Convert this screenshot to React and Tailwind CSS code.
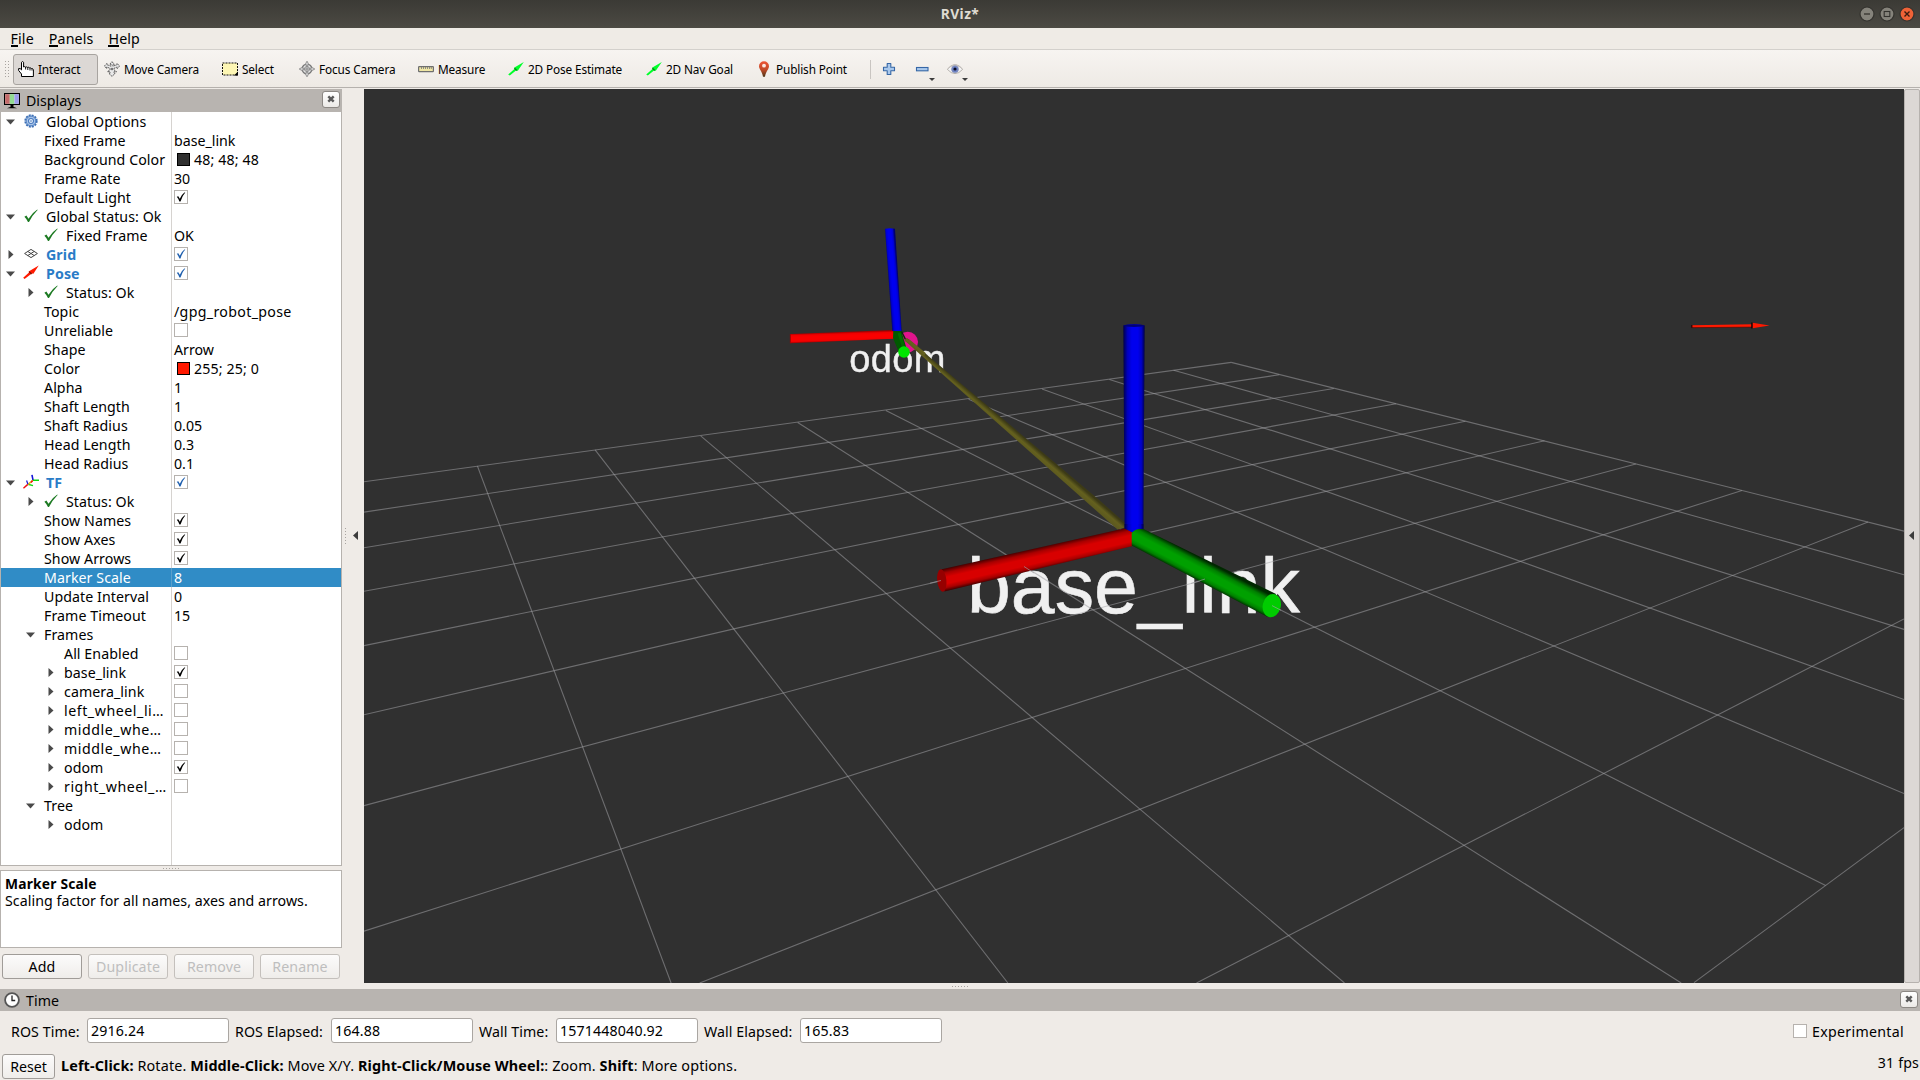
import React from "react";

/* ---------- small icons ---------- */

const Svg = ({ s = 16, children, className = "" }) => (
  <svg width={s} height={s} viewBox={`0 0 ${s} ${s}`} className={`shrink-0 ${className}`}>
    {children}
  </svg>
);

const HandIcon = () => (
  <Svg>
    <path
      d="M3.5 15.5V13L.6 9.4V7.6h1.6l1.3 1.3V1.3Q4.6-.2 5.6 1.3V6q1-.8 2 .2 1-.8 2.1.3 1.1-.7 2 .4.9-.3 1.8.6.9-.2 1.9 1v7z"
      fill="#fff"
      stroke="#000"
      strokeWidth="1"
    />
    <path d="M7.6 6v2.5M9.8 6.5v2.5M12 7v2.5M14 7.6v2" stroke="#000" strokeWidth=".9" />
  </Svg>
);

const MoveIcon = () => (
  <Svg>
    <path
      d="M8 .7l2.3 2.6H8.9v1.9L13 3.7V2.4L15.6 5 13.3 7.6V6L10 7.3v1.6l2.6 1.8H10v1.6h1.2L8 15.4l-3.2-3.1H6v-1.6H3.4L6 8.9V7.3L2.7 6v1.6L.4 5 3 2.4V3.7L7.1 5.2V3.3H5.7z"
      fill="#e9e9e9"
      stroke="#555"
      strokeWidth=".9"
      strokeDasharray="2 .6"
    />
    <circle cx="8" cy="8" r="1.3" fill="#777" />
  </Svg>
);

const SelectIcon = () => (
  <Svg>
    <rect x=".5" y="2" width="15" height="12" fill="#fdf6b4" stroke="#111" strokeDasharray="2 1" />
    <path d="M12 14.5h4v-4z" fill="#000" />
  </Svg>
);

const FocusIcon = () => (
  <Svg>
    <circle cx="8" cy="8" r="4.9" fill="#e4e4e4" stroke="#777" strokeWidth="1.3" />
    <circle cx="8" cy="8" r="2.5" fill="none" stroke="#8a8a8a" />
    <path d="M8 4v8M4 8h8" stroke="#8a8a8a" />
    <path
      d="M8 .2l1.3 2.3v1.7H6.7V2.5zM8 15.8l1.3-2.3v-1.7H6.7v1.7zM.2 8l2.3-1.3h1.7v2.6H2.5zM15.8 8l-2.3-1.3h-1.7v2.6h1.7z"
      fill="#d8d8d8"
      stroke="#808080"
      strokeWidth=".8"
    />
  </Svg>
);

const RulerIcon = () => (
  <Svg>
    <rect x=".6" y="5.6" width="14.8" height="5" rx=".6" fill="#efe6a4" stroke="#6f6f6f" strokeWidth="1.2" />
    <path d="M3.5 6v2M5.5 6v2M7.5 6v2M9.5 6v2M11.5 6v2M13.3 6v2" stroke="#777" strokeWidth=".8" />
  </Svg>
);

const GreenArrow = () => (
  <Svg>
    <path d="M.2 13.4L6.4 8 6 6.8 15.8 1 9.8 9.8 8 9.5 1.8 14.4z" fill="#00ff2a" />
    <path d="M6.5 7.3l2.3 2.2" stroke="#0a7a1c" strokeWidth="1.2" />
  </Svg>
);

const PinIcon = () => (
  <Svg>
    <defs>
      <linearGradient id="pin" x1="0" y1="0" x2="0" y2="1">
        <stop offset="0" stopColor="#ee5535" />
        <stop offset=".55" stopColor="#c04a28" />
        <stop offset="1" stopColor="#4a3416" />
      </linearGradient>
    </defs>
    <path d="M8 .2a5 5 0 0 1 5 5c0 3-3.2 4.8-4 10.6H7C6.2 10 3 8.2 3 5.2a5 5 0 0 1 5-5z" fill="url(#pin)" />
    <circle cx="8" cy="4.7" r="1.9" fill="#fbeae4" />
  </Svg>
);

const PlusIcon = () => (
  <Svg>
    <path
      d="M6.2 2.5h3.6v3.7h3.7v3.6H9.8v3.7H6.2V9.8H2.5V6.2h3.7z"
      fill="#a9c8ec"
      stroke="#3667a6"
      strokeWidth="1.1"
      strokeLinejoin="round"
    />
  </Svg>
);

const MinusIcon = () => (
  <Svg>
    <rect x="2.5" y="6.5" width="11.5" height="3.3" fill="#a9c8ec" stroke="#3667a6" strokeWidth="1.1" />
  </Svg>
);

const EyeIcon = () => (
  <Svg>
    <path d="M.3 8.3Q8-1 15.7 8.3 8 17 .3 8.3z" fill="#f4f4f4" stroke="#b5b0ac" strokeWidth="1" />
    <path d="M.4 8Q8-1.3 15.6 8 8 2 .4 8z" fill="#c4bfbb" />
    <circle cx="8" cy="8.2" r="3.5" fill="#6d82c4" stroke="#8b93b5" strokeWidth=".6" />
    <circle cx="8" cy="8" r="1.6" fill="#0a0d25" />
  </Svg>
);

const MonitorIcon = () => (
  <Svg>
    <rect x=".6" y=".6" width="14.8" height="10.8" fill="#fff" stroke="#000" strokeWidth="1.2" />
    <rect x="1.2" y="1.2" width="4.6" height="9.6" fill="#c46a6a" />
    <rect x="5.8" y="1.2" width="4.6" height="9.6" fill="#92dc92" />
    <rect x="10.4" y="1.2" width="4.4" height="9.6" fill="#9c9cec" />
    <path d="M6.5 12h3v2h-3z" fill="#000" />
    <path d="M3 15.3Q8 12.3 13 15.3z" fill="#000" />
  </Svg>
);

const GearIcon = () => (
  <Svg s={14}>
    <circle cx="7" cy="7" r="5.7" fill="none" stroke="#3d6fb4" strokeWidth="1.9" strokeDasharray="2 .98" />
    <circle cx="7" cy="7" r="4.9" fill="#a7c3e8" stroke="#4a7cc0" strokeWidth="1" />
    <circle cx="7" cy="7" r="2.5" fill="#e8f0fa" stroke="#4a7cc0" strokeWidth="1.1" />
    <circle cx="7" cy="7" r=".8" fill="#3d6fb4" />
  </Svg>
);

const OkIcon = () => (
  <Svg s={14}>
    <path d="M.4 7.7l2-1.2 2.1 3.2Q8 4 13.3.6L13.6 1Q8.5 6 5 13H4Q2.5 9.7.4 7.7z" fill="#1c7a22" />
  </Svg>
);

const GridIcon = () => (
  <Svg s={14}>
    <path
      d="M.6 6.5L7 2.4l6.4 4.1L7 10.6zM3.8 8.55L10.2 4.45M3.8 4.45L10.2 8.55"
      fill="none"
      stroke="#444"
      strokeWidth="1"
    />
  </Svg>
);

const PoseIcon = () => (
  <Svg s={16} className="-mx-px">
    <path d="M.2 12.8L6 7.6 5.6 6.4 15.7.6 10.4 8.7 8.8 8.6 1.6 14.1z" fill="#ff1a00" />
    <path d="M6.2 6.8L8.6 9" stroke="#7c1206" strokeWidth="1.3" />
  </Svg>
);

const TfIcon = () => (
  <Svg s={16} className="-mx-px">
    <path d="M9 .8L10 6.2" stroke="#1414d8" strokeWidth="1.6" />
    <path d="M10 6.3h6M5 10.3l5 1.3" stroke="#10d810" strokeWidth="1.4" />
    <path d="M9.6 6.6L5 10.3" stroke="#e8b020" strokeWidth="1.6" />
    <path d="M4.8 10.4L.4 14.3M9.6 6.6L8 8.5" stroke="#f01010" strokeWidth="1.5" />
    <path d="M3.6 6.5L4.8 10" stroke="#1414d8" strokeWidth="1.2" />
  </Svg>
);

const ClockIcon = () => (
  <Svg>
    <circle cx="8" cy="8" r="6.9" fill="#fff" stroke="#555" strokeWidth="1.8" />
    <path d="M8 3.5V8.5h3.2" fill="none" stroke="#222" strokeWidth="1.3" />
  </Svg>
);

const icons = { gear: GearIcon, ok: OkIcon, grid: GridIcon, pose: PoseIcon, tf: TfIcon };

const Dots = ({ vertical }) => (
  <div className={vertical ? "flex flex-col gap-[2px]" : "flex gap-[2px]"}>
    {[0, 1, 2, 3, 4, 5].map((n) => (
      <i key={n} className="block h-px w-px bg-[#a8a4a0]" />
    ))}
  </div>
);

const LeftTriangle = () => (
  <svg width="5" height="9" viewBox="0 0 5 9" className="mb-[2px] shrink-0">
    <path d="M5 0v9L0 4.5z" fill="#3c3c3c" />
  </svg>
);

const CloseBox = () => (
  <button className="flex h-[17px] w-[18px] items-center justify-center rounded-[3px] border border-[#8c8884] bg-gradient-to-b from-white to-[#eceae7]">
    <svg width="8" height="8" viewBox="0 0 8 8">
      <path d="M1.3 1.3l5.4 5.4M6.7 1.3L1.3 6.7" stroke="#5a5a5a" strokeWidth="2.4" />
    </svg>
  </button>
);

/* ---------- title, menu, toolbar ---------- */

const WinButton = ({ kind }) => (
  <svg width="16" height="16" viewBox="0 0 16 16">
    <circle
      cx="8"
      cy="8"
      r="7"
      fill={kind === "close" ? "#ee6237" : "#85837b"}
      stroke="#33322e"
      strokeWidth="1.2"
    />
    {kind === "min" && <path d="M5 8h6" stroke="#33322e" strokeWidth="1.3" />}
    {kind === "max" && <rect x="5.2" y="5.5" width="5.6" height="5" fill="none" stroke="#33322e" strokeWidth="1.1" />}
    {kind === "close" && <path d="M5.5 5.5l5 5M10.5 5.5l-5 5" stroke="#3a1c10" strokeWidth="1.4" />}
  </svg>
);

const TitleBar = () => (
  <header className="grid h-7 grid-cols-[1fr_auto_1fr] items-center bg-gradient-to-b from-[#3b3a35] to-[#4c4a43]">
    <span />
    <h1 className="text-[13.8px] font-bold leading-7 tracking-[.4px] text-[#dfdbd2]">RViz*</h1>
    <div className="flex justify-end gap-1 pr-[5px]">
      <WinButton kind="min" />
      <WinButton kind="max" />
      <WinButton kind="close" />
    </div>
  </header>
);

const MenuItem = ({ first, rest }) => (
  <span>
    <span className="inline-block h-[19px] border-b-2 border-black leading-[21px]">{first}</span>
    {rest}
  </span>
);

const MenuBar = () => (
  <nav className="flex h-[22px] gap-[15px] border-b border-[#d3d0cc] bg-[#efebe6] pl-[10.5px] leading-[21px] tracking-[.15px]">
    <MenuItem first="F" rest="ile" />
    <MenuItem first="P" rest="anels" />
    <MenuItem first="H" rest="elp" />
  </nav>
);

const tools = [
  { label: "Interact", Icon: HandIcon, box: "w-[85px] mr-px border-[#a8a4a0] bg-[#dcd8d5]" },
  { label: "Move Camera", Icon: MoveIcon, box: "w-[118px] border-transparent" },
  { label: "Select", Icon: SelectIcon, box: "w-[77px] border-transparent" },
  { label: "Focus Camera", Icon: FocusIcon, box: "w-[119px] border-transparent" },
  { label: "Measure", Icon: RulerIcon, box: "w-[90px] border-transparent" },
  { label: "2D Pose Estimate", Icon: GreenArrow, box: "w-[138px] border-transparent" },
  { label: "2D Nav Goal", Icon: GreenArrow, box: "w-[110px] border-transparent" },
  { label: "Publish Point", Icon: PinIcon, box: "w-[119px] border-transparent" },
];

const DropMark = () => (
  <svg width="6" height="3" viewBox="0 0 6 3" className="-ml-[1px] mb-[-20px]">
    <path d="M0 0h6L3 3z" fill="#3c3c3c" />
  </svg>
);

const ToolBar = () => (
  <div className="flex h-[38px] items-center border-b border-[#b5b1ad] bg-gradient-to-b from-[#f7f4f1] to-[#eeeae5] pt-px text-[11.8px] tracking-[-.13px]">
    <div className="mr-1 flex w-[9px] justify-end gap-[2px]">
      <Dots vertical />
      <Dots vertical />
    </div>
    {tools.map(({ label, Icon, box }) => (
      <button key={label} className={`flex h-[31px] items-center gap-1 rounded-[3px] border pl-1 ${box}`}>
        <Icon />
        <span className="whitespace-nowrap pt-px">{label}</span>
      </button>
    ))}
    <div className="h-[19px] w-px bg-[#c9c5c1]" />
    <div className="ml-[10px] flex items-center">
      <PlusIcon />
      <div className="ml-[17px] flex items-center">
        <MinusIcon />
        <DropMark />
      </div>
      <div className="ml-3 flex items-center">
        <EyeIcon />
        <DropMark />
      </div>
    </div>
  </div>
);

/* ---------- displays tree ---------- */

const rows = [
  { d: 0, a: "open", icon: "gear", t: "Global Options" },
  { d: 1, t: "Fixed Frame", v: "base_link" },
  { d: 1, t: "Background Color", swatch: "bg-[#303030]", v: "48; 48; 48" },
  { d: 1, t: "Frame Rate", v: "30" },
  { d: 1, t: "Default Light", c: "on" },
  { d: 0, a: "open", icon: "ok", t: "Global Status: Ok" },
  { d: 1, icon: "ok", t: "Fixed Frame", v: "OK" },
  { d: 0, a: "shut", icon: "grid", t: "Grid", blue: true, c: "blue" },
  { d: 0, a: "open", icon: "pose", t: "Pose", blue: true, c: "blue" },
  { d: 1, a: "shut", icon: "ok", t: "Status: Ok" },
  { d: 1, t: "Topic", v: "/gpg_robot_pose", wide: true },
  { d: 1, t: "Unreliable", c: "off" },
  { d: 1, t: "Shape", v: "Arrow" },
  { d: 1, t: "Color", swatch: "bg-[#ff1900]", v: "255; 25; 0" },
  { d: 1, t: "Alpha", v: "1" },
  { d: 1, t: "Shaft Length", v: "1" },
  { d: 1, t: "Shaft Radius", v: "0.05" },
  { d: 1, t: "Head Length", v: "0.3" },
  { d: 1, t: "Head Radius", v: "0.1" },
  { d: 0, a: "open", icon: "tf", t: "TF", blue: true, c: "blue" },
  { d: 1, a: "shut", icon: "ok", t: "Status: Ok" },
  { d: 1, t: "Show Names", c: "on" },
  { d: 1, t: "Show Axes", c: "on" },
  { d: 1, t: "Show Arrows", c: "on" },
  { d: 1, t: "Marker Scale", v: "8", selected: true },
  { d: 1, t: "Update Interval", v: "0" },
  { d: 1, t: "Frame Timeout", v: "15" },
  { d: 1, a: "open", t: "Frames" },
  { d: 2, t: "All Enabled", c: "off" },
  { d: 2, a: "shut", t: "base_link", c: "on" },
  { d: 2, a: "shut", t: "camera_link", c: "off" },
  { d: 2, a: "shut", t: "left_wheel_li…", cut: true, c: "off" },
  { d: 2, a: "shut", t: "middle_whe…", cut: true, c: "off" },
  { d: 2, a: "shut", t: "middle_whe…", cut: true, c: "off" },
  { d: 2, a: "shut", t: "odom", c: "on" },
  { d: 2, a: "shut", t: "right_wheel_…", cut: true, c: "off" },
  { d: 1, a: "open", t: "Tree" },
  { d: 2, a: "shut", t: "odom" },
];

const indent = ["pl-0", "pl-5", "pl-10"];

const CheckBox = ({ state }) => (
  <span className="flex h-[14px] w-[14px] shrink-0 items-center justify-center border border-[#b6b2ae] bg-white">
    {state !== "off" && (
      <svg width="10" height="10" viewBox="0 0 10 10">
        <path
          d="M.8 4.8l1.5-.6 1.5 2.5Q5.7 2.6 8.4.6h.9Q6.2 4 4.5 9.4H3.4Q2.3 6.5.8 4.8z"
          fill={state === "blue" ? "#1f5fae" : "#000"}
        />
      </svg>
    )}
  </span>
);

const Row = ({ row }) => {
  const Icon = row.icon && icons[row.icon];
  return (
    <div className={`flex h-[19px] shrink-0 leading-[19px] ${row.selected ? "bg-[#308cc6] text-white" : ""}`}>
      <div
        className={`flex w-[171px] shrink-0 items-center whitespace-nowrap border-r ${
          row.selected ? "border-[#5a9fcb]" : "border-[#d6d3d0]"
        } ${indent[row.d]}`}
      >
        <span className="mr-1 flex w-[19px] shrink-0 items-center justify-center">
          {row.a === "open" && (
            <svg width="9" height="6" viewBox="0 0 9 6">
              <path d="M0 .5h9L4.5 5.5z" fill="#4a4a4a" />
            </svg>
          )}
          {row.a === "shut" && (
            <svg width="6" height="9" viewBox="0 0 6 9">
              <path d="M.5 0v9L5.5 4.5z" fill="#4a4a4a" />
            </svg>
          )}
        </span>
        {Icon && (
          <span className="mb-[2px] mr-2 flex w-[14px] shrink-0 justify-center">
            <Icon />
          </span>
        )}
        <span
          className={
            row.blue ? "font-bold tracking-[.1px] text-[#2a7cc7]" : row.cut ? "tracking-[.55px]" : "tracking-[.07px]"
          }
        >
          {row.t}
        </span>
      </div>
      <div className={`flex items-center pl-[2px] ${row.wide ? "tracking-[.33px]" : ""}`}>
        {row.c && (
          <span className="mb-px">
            <CheckBox state={row.c} />
          </span>
        )}
        {row.swatch && <span className={`ml-[3px] mr-1 h-[13px] w-[13px] border border-black ${row.swatch}`} />}
        <span className={row.swatch ? "tracking-[.12px]" : ""}>{row.v}</span>
      </div>
    </div>
  );
};

const PanelButton = ({ children, off }) => (
  <button
    className={`h-[25px] w-20 rounded-[3px] border bg-gradient-to-b from-[#fcfbfb] to-[#efedea] leading-[23px] tracking-[.1px] ${
      off ? "border-[#c4c0bc] text-[#bebebe]" : "border-[#a09c98] text-black"
    }`}
  >
    {children}
  </button>
);

const DisplaysPanel = () => (
  <aside className="flex w-[342px] flex-col">
    <div className="flex h-[23px] items-center bg-[#b8b4b0] pl-1 pr-[2px]">
      <MonitorIcon />
      <span className="ml-[6px] flex-1 leading-[23px]">Displays</span>
      <div className="mb-[3px]">
        <CloseBox />
      </div>
    </div>
    <div className="flex h-[754px] flex-col border-x border-b border-[#b6b2ae] bg-white">
      {rows.map((row, n) => (
        <Row key={n} row={row} />
      ))}
      <div className="w-[171px] flex-1 border-r border-[#d6d3d0]" />
    </div>
    <div className="flex h-1 items-center justify-center">
      <Dots />
    </div>
    <div className="h-[78px] border border-[#b6b2ae] bg-white pl-1 pt-[4px] leading-[17px]">
      <p className="text-[13.8px] font-bold tracking-[.2px]">Marker Scale</p>
      <p className="whitespace-nowrap tracking-[.05px]">Scaling factor for all names, axes and arrows.</p>
    </div>
    <div className="flex gap-[6px] pl-[2px] pt-[6px]">
      <PanelButton>Add</PanelButton>
      <PanelButton off>Duplicate</PanelButton>
      <PanelButton off>Remove</PanelButton>
      <PanelButton off>Rename</PanelButton>
    </div>
  </aside>
);

/* ---------- 3D view ---------- */

const gridLines = [
  [364, 481.8, 1231.2, 362.4],
  [364, 512.1, 1279.2, 374.8],
  [364, 547.7, 1333.8, 388.5],
  [364, 591.2, 1396, 403.8],
  [364, 645.6, 1465.4, 421.3],
  [364, 714.8, 1544.5, 440.7],
  [364, 805.6, 1635.8, 464],
  [364, 931.2, 1741.9, 490.5],
  [699.7, 983, 1868, 522],
  [1196.5, 983, 1904, 619],
  [1694, 982.6, 1904, 827.6],
  [477.4, 466, 671.1, 983],
  [595.1, 449.9, 1007.9, 983],
  [700.7, 435.8, 1344.5, 983],
  [797.7, 422.5, 1681.2, 983],
  [885.9, 410.5, 1825.6, 885.6],
  [968.6, 399.3, 1904, 793.6],
  [1042, 388.9, 1904, 699.5],
  [1109.4, 379.4, 1904, 629.4],
  [1173.6, 370.3, 1904, 574.7],
  [1231.2, 362.4, 1904, 531.1],
];

const Stops = ({ dark, mid, light }) => (
  <>
    <stop offset="0" stopColor={dark} />
    <stop offset=".2" stopColor={mid} />
    <stop offset=".4" stopColor={light} />
    <stop offset=".68" stopColor={light} />
    <stop offset=".85" stopColor={mid} />
    <stop offset="1" stopColor={dark} />
  </>
);

const Scene = () => (
  <svg
    width="1540"
    height="894"
    viewBox="364 89 1540 894"
    className="shrink-0 bg-[#303030]"
    fontFamily="'Liberation Sans', Arial, sans-serif"
  >
    <defs>
      <linearGradient id="blueBig" x1="0" x2="1" y1="0" y2="0">
        <Stops dark="#000048" mid="#0000c0" light="#0000ee" />
      </linearGradient>
      <linearGradient id="blueSmall" gradientUnits="userSpaceOnUse" x1="888" y1="280.4" x2="898" y2="279.6">
        <Stops dark="#000070" mid="#0000d4" light="#0000f0" />
      </linearGradient>
      <linearGradient id="redBig" gradientUnits="userSpaceOnUse" x1="1034" y1="548" x2="1039" y2="570">
        <Stops dark="#3c0000" mid="#a80000" light="#d80000" />
      </linearGradient>
      <linearGradient id="redSmall" gradientUnits="userSpaceOnUse" x1="842" y1="332" x2="842.3" y2="341.5">
        <Stops dark="#a00000" mid="#f00000" light="#fa0000" />
      </linearGradient>
      <linearGradient id="greenBig" gradientUnits="userSpaceOnUse" x1="1208" y1="562" x2="1198" y2="581">
        <Stops dark="#002800" mid="#008000" light="#00a000" />
      </linearGradient>
      <linearGradient id="link" gradientUnits="userSpaceOnUse" x1="1100" y1="503" x2="1094" y2="510">
        <stop offset="0" stopColor="#3c3a16" />
        <stop offset=".4" stopColor="#64601e" />
        <stop offset="1" stopColor="#5a5720" />
      </linearGradient>
    </defs>

    <g fill="#f0f0f0" className="blur-[0.6px]">
      <text x="849.3" y="371.7" fontSize="38" textLength="96" stroke="#f0f0f0" strokeWidth=".4">
        odom
      </text>
      <text x="967" y="612.5" fontSize="77.5" textLength="333" lengthAdjust="spacingAndGlyphs" stroke="#f0f0f0" strokeWidth=".6">
        base_link
      </text>
    </g>

    <g stroke="#a0a0a4" strokeOpacity=".55" strokeWidth="1.1">
      {gridLines.map(([x1, y1, x2, y2], n) => (
        <line key={n} x1={x1} y1={y1} x2={x2} y2={y2} />
      ))}
    </g>

    {/* odom frame */}
    <circle cx="907.7" cy="342" r="10.3" fill="#e1148c" />
    <path d="M904.5 340.5L907.5 338.5 1098 499 1129 526.5 1117.5 529.5 1086 501.5z" fill="url(#link)" />
    <path d="M790.7 334L894 330v8.8L790.7 343.3z" fill="url(#redSmall)" />
    <path d="M790.4 334v9.3" stroke="#b00000" strokeWidth="1" />
    <path d="M885 228.7Q890 227.7 895 228.7L901.7 331 892.3 331z" fill="url(#blueSmall)" />
    <path d="M893.3 331h8l6 20-8.500 1-5.800-14z" fill="#005a00" />
    <path d="M899 333l4.500 14" stroke="#007000" strokeWidth="3" />
    <path d="M901.5 331.5l4 8" stroke="#0a2c0a" strokeWidth="1.5" />
    <circle cx="904" cy="352" r="5.8" fill="#00e600" />
    <path d="M905.5 339.5L909 341 925 354.500" stroke="#64601e" strokeWidth="3" fill="none" />

    {/* base_link frame */}
    <path d="M1123.3 325.5Q1134 323 1144.7 325.5L1143.4 532H1124.6z" fill="url(#blueBig)" />
    <ellipse cx="1134" cy="325.6" rx="10.7" ry="1.3" fill="#000078" />
    <path d="M941.7 569.3L1125 528.3 1132 532.3V546.3L944.5 591.5z" fill="url(#redBig)" />
    <path d="M1124.6 528.4V524h18.8v5l-11 3.3z" fill="url(#blueBig)" />
    <ellipse cx="941.8" cy="580.5" rx="4.6" ry="11.2" transform="rotate(-6 941.8 580.5)" fill="#960000" />
    <path d="M1131.7 533Q1137 527.5 1144 529.3L1276 594 1267.5 617 1131.7 545.5z" fill="url(#greenBig)" />
    <ellipse cx="1271.8" cy="605.6" rx="9" ry="11.7" transform="rotate(14 1271.8 605.6)" fill="#00cc00" />
    <path
      d="M930 583.2L941 580.5M1024 566.5L1034 573M1191 583.5L1205 579M1272 605.6L1281 610.3"
      stroke="#a0a0a4"
      strokeOpacity=".65"
    />

    {/* pose arrow */}
    <path d="M1691.5 325.2L1752 324.3V327L1691.5 327.6z" fill="#ff1900" />
    <path d="M1691.5 327.7L1752 327.1" stroke="#5a0a04" strokeWidth=".7" />
    <path d="M1691.8 325v2.8" stroke="#200" strokeWidth="1.2" />
    <path d="M1752.5 322.8L1769.5 325.4 1752.5 328.3z" fill="#ff1900" />
    <path d="M1751.9 322.5v6" stroke="#100" strokeWidth="1.3" />
  </svg>
);

/* ---------- time panel and status bar ---------- */

const fields = [
  { label: "ROS Time:", value: "2916.24", w: "w-[76px]" },
  { label: "ROS Elapsed:", value: "164.88", w: "w-[96px]" },
  { label: "Wall Time:", value: "1571448040.92", w: "w-[77px]" },
  { label: "Wall Elapsed:", value: "165.83", w: "w-[96px]" },
];

const TimePanel = () => (
  <section>
    <div className="flex h-[22px] items-center bg-[#b8b4b0] pl-1 pr-[2px]">
      <ClockIcon />
      <span className="ml-[6px] flex-1 pt-px leading-[22px] tracking-[.1px]">Time</span>
      <div className="mb-[2px]">
        <CloseBox />
      </div>
    </div>
    <div className="flex h-[39px] items-center gap-[6px] pl-[11px] pr-4">
      {fields.map((f) => (
        <label key={f.label} className="flex items-center">
          <span className={`whitespace-nowrap pt-[2px] tracking-[.08px] ${f.w}`}>{f.label}</span>
          <span className="h-[25px] w-[142px] rounded-[3px] border border-[#aaa6a2] bg-white pl-[3px] leading-[23px] tracking-[.15px]">
            {f.value}
          </span>
        </label>
      ))}
      <label className="ml-auto flex items-center gap-[5px] pt-[2px] tracking-[.3px]">
        <CheckBox state="off" />
        Experimental
      </label>
    </div>
  </section>
);

const StatusBar = () => (
  <footer className="flex h-[30px] items-start pl-[2px] pt-1">
    <button className="h-[25px] w-[53px] rounded-[3px] border border-[#a09c98] bg-gradient-to-b from-[#fcfbfb] to-[#efedea] leading-[23px]">
      Reset
    </button>
    <p className="ml-[6px] whitespace-nowrap pt-[2px] text-[14.4px] leading-[20px] tracking-[.12px]">
      <b>Left-Click:</b> Rotate. <b>Middle-Click:</b> Move X/Y. <b>Right-Click/Mouse Wheel:</b>: Zoom. <b>Shift</b>: More
      options.
    </p>
    <span className="ml-auto pr-px leading-[18px] tracking-[.15px]">31 fps</span>
  </footer>
);

export default function App() {
  return (
    <div className="flex h-[1080px] w-[1920px] flex-col overflow-hidden bg-[#efebe7] font-['Noto_Sans',sans-serif] text-[14.2px] text-black">
      <TitleBar />
      <MenuBar />
      <ToolBar />
      <main className="mt-px flex h-[894px]">
        <DisplaysPanel />
        <div className="flex w-[22px] items-center gap-[7px] pl-[3px]">
          <Dots vertical />
          <LeftTriangle />
        </div>
        <Scene />
        <div className="flex w-4 items-center rounded-[2px] border border-[#b6b2ae] bg-[#dcd8d5] pl-[4px]">
          <LeftTriangle />
        </div>
      </main>
      <div className="flex h-[6px] items-center justify-center">
        <Dots />
      </div>
      <TimePanel />
      <StatusBar />
    </div>
  );
}
